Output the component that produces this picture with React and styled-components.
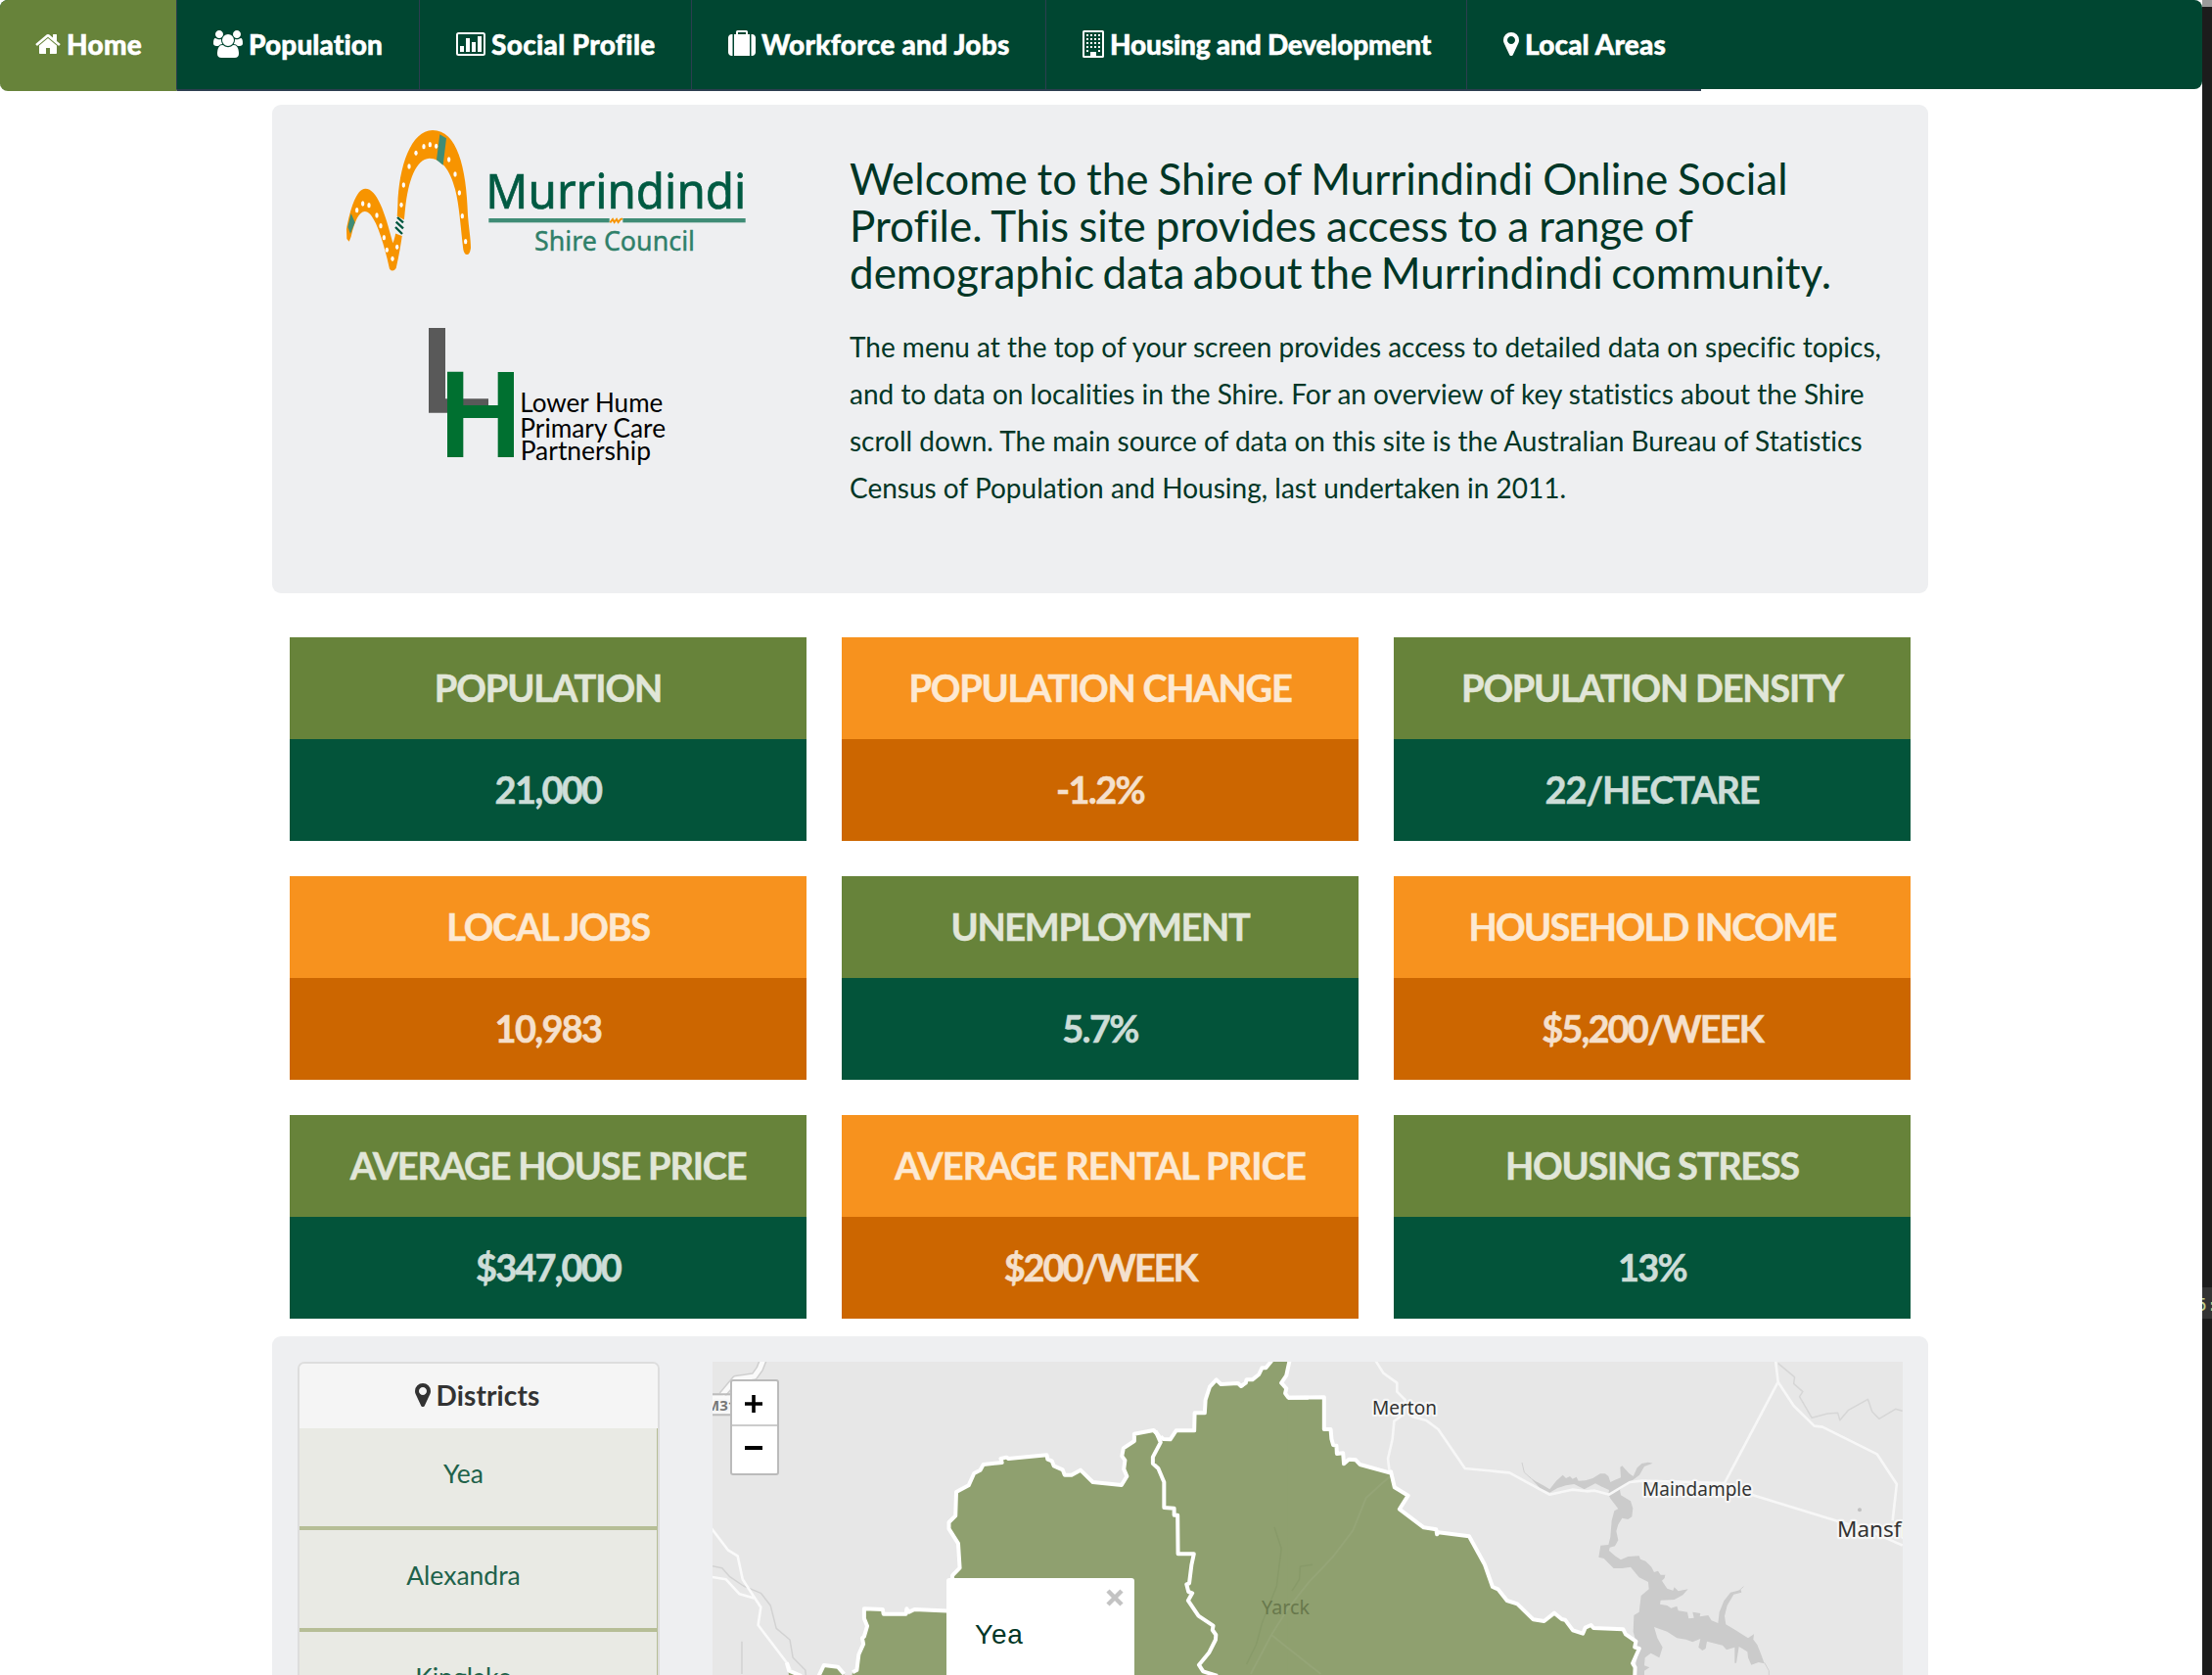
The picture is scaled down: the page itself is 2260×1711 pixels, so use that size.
import React from "react";
import styled, { createGlobalStyle } from "styled-components";

const GlobalStyle = createGlobalStyle`
  * { box-sizing: border-box; }
  html, body { margin: 0; padding: 0; background: #fff; }
  body {
    font-family: Lato, "Open Sans", sans-serif;
    font-variant-ligatures: none;
    overflow: hidden;
  }
`;

const Screen = styled.div`
  display: flex;
  width: 2260px;
  height: 1711px;
  overflow: hidden;
`;

const Page = styled.div`
  width: 2250px;
  height: 1711px;
  overflow: hidden;
  background: #fff;
`;

const Backdrop = styled.aside`
  width: 10px;
  height: 1711px;
  background: #1c1c1c;
  border-top: 7px solid #9a9a9a;
  padding-top: 1308px;
`;

const BackdropLine = styled.div`
  height: 32px;
  background: #333;
  color: #c3cf8d;
  font: 18px/35px "DejaVu Sans Mono", monospace;
  overflow: hidden;
  white-space: nowrap;
  text-indent: -6px;
`;

const Nav = styled.nav`
  display: flex;
  align-items: flex-start;
  height: 91px;
  background: #004631;
  border-radius: 8px;
`;

const NavItem = styled.a`
  display: flex;
  align-items: center;
  width: ${(p) => p.$width}px;
  height: 93px;
  padding: 0 0 1px ${(p) => (p.$active ? 36 : 37)}px;
  gap: 6px;
  color: #fff;
  background: ${(p) => (p.$active ? "#67833a" : "#004631")};
  border-right: ${(p) => (p.$last ? "0" : "1px solid #2c3e50")};
  border-bottom: 2px solid ${(p) => (p.$active ? "#67833a" : "#2c3e50")};
  border-radius: ${(p) => (p.$active ? "8px 0 0 8px" : "0")};
  font-size: 28px;
  font-weight: 900;
  -webkit-text-stroke: 0.5px #fff;
  letter-spacing: ${(p) => p.$spacing || 0}px;
  white-space: nowrap;
`;

const Glyph = styled.svg`
  display: block;
  flex: none;
  width: ${(p) => p.$width}px;
  height: 28px;
  fill: currentColor;
`;

const Container = styled.main`
  width: 1692px;
  margin: 16px 0 0 278px;
`;

const Well = styled.section`
  display: flex;
  background: #eeeff1;
  border-radius: 9px;
`;

const Intro = styled(Well)`
  height: 499px;
`;

const Logos = styled.div`
  width: 590px;
  padding: 23px 0 0 72px;
`;

const IntroText = styled.div`
  color: #003626;
  padding-top: 51px;
`;

const Lead = styled.h1`
  margin: 0;
  font-size: 44px;
  font-weight: 400;
  line-height: 48px;
  white-space: nowrap;
`;

const Line = styled.span`
  display: block;
  word-spacing: ${(p) => p.$words || 0}px;
`;

const Body = styled.p`
  margin: 28px 0 0;
  font-size: 28px;
  line-height: 48px;
  white-space: nowrap;
`;

const Stats = styled.section`
  display: grid;
  grid-template-columns: repeat(3, 528px);
  gap: 36px;
  padding: 45px 18px 18px;
`;

const Stat = styled.article`
  display: grid;
  grid-template-rows: 104px 104px;
  font-size: 38px;
  font-weight: 700;
  text-align: center;
  line-height: 103px;
  white-space: nowrap;
`;

const StatTitle = styled.div`
  background: ${(p) => (p.$warm ? "#f7921e" : "#67833a")};
  color: ${(p) => (p.$warm ? "#fde9d2" : "#e1e6d8")};
  letter-spacing: ${(p) => p.$spacing}px;
  -webkit-text-stroke: 0.5px currentColor;
`;

const StatValue = styled.div`
  background: ${(p) => (p.$warm ? "#cc6600" : "#03543a")};
  color: ${(p) => (p.$warm ? "#f5e0cc" : "#cdddd8")};
  letter-spacing: ${(p) => p.$spacing}px;
  -webkit-text-stroke: 0.5px currentColor;
`;

const Explore = styled(Well)`
  align-items: flex-start;
  height: 420px;
  padding: 26px;
  gap: 54px;
`;

const Districts = styled.div`
  width: 370px;
  height: 500px;
  border: 2px solid #ddd;
  border-radius: 7px;
  overflow: hidden;
`;

const DistrictsHead = styled.div`
  display: flex;
  align-items: center;
  justify-content: center;
  gap: 5px;
  height: 66px;
  padding: 0 2px 2px 0;
  background: #f5f5f5;
  color: #333;
  font-size: 28px;
  font-weight: 700;
  letter-spacing: 0.15px;
`;

const District = styled.div`
  height: 104px;
  padding-right: 30px;
  border-right: 1px solid #b6be96;
  border-bottom: 4px solid #b6be96;
  background: #e9eae4;
  color: #20624a;
  font-size: 26.5px;
  line-height: 92px;
  text-align: center;
`;

const MapBox = styled.div`
  position: relative;
  width: 1216px;
  height: 320px;
  background: #e7e7e7;
  overflow: hidden;
`;

const ZoomControl = styled.div`
  position: absolute;
  left: 18px;
  top: 18px;
  width: 50px;
  border: 2px solid #bbb;
  border-radius: 3px;
  background: #fff;
`;

const ZoomButton = styled.div`
  display: flex;
  align-items: center;
  justify-content: center;
  height: ${(p) => (p.$first ? 46 : 48)}px;
  padding: ${(p) => (p.$first ? "2px" : "0")} 2px 0 0;
  border-bottom: ${(p) => (p.$first ? "2px solid #ccc" : "0")};
`;

const Popup = styled.div`
  position: absolute;
  left: 239px;
  top: 221px;
  width: 192px;
  height: 140px;
  padding: 40px 29px;
  border-radius: 3px;
  background: #fff;
  color: #003626;
  font: 28px/36px "Liberation Sans", Arial, sans-serif;
  letter-spacing: 0.8px;
`;

const Close = styled.svg`
  position: absolute;
  right: 11px;
  top: 11px;
`;

const HomeIcon = () => (
  <Glyph $width={26} viewBox="64 0 1664 1792">
    <path d="M1472 992v480q0 26-19 45t-45 19h-384v-384h-256v384h-384q-26 0-45-19t-19-45v-480q0-1 .5-3t.5-3l575-474 575 474q1 2 1 6zm223-69l-62 74q-8 9-21 11h-3q-13 0-21-7l-692-577-692 577q-12 8-24 7-13-2-21-11l-62-74q-8-10-7-23.5t11-21.5l719-599q32-26 76-26t76 26l244 204v-195q0-14 9-23t23-9h192q14 0 23 9t9 23v408l219 182q10 8 11 21.5t-7 23.5z" />
  </Glyph>
);

const UsersIcon = () => (
  <Glyph $width={30} viewBox="0 0 1920 1792">
    <path d="M593 896q-162 5-265 128h-134q-82 0-138-40.5t-56-118.5q0-353 124-353 6 0 43.5 21t97.5 42.5 119 21.5q67 0 133-23-5 37-5 66 0 139 81 256zm1071 637q0 120-73 189.5t-194 69.5h-874q-121 0-194-69.5t-73-189.5q0-53 3.5-103.5t14-109 26.5-108.5 43-97.5 62-81 85.5-53.5 111.5-20q10 0 43 21.5t73 48 107 48 135 21.5 135-21.5 107-48 73-48 43-21.5q61 0 111.5 20t85.5 53.5 62 81 43 97.5 26.5 108.5 14 109 3.5 103.5zm-1024-1277q0 106-75 181t-181 75-181-75-75-181 75-181 181-75 181 75 75 181zm704 384q0 159-112.5 271.5t-271.5 112.5-271.5-112.5-112.5-271.5 112.5-271.5 271.5-112.5 271.5 112.5 112.5 271.5zm576 225q0 78-56 118.5t-138 40.5h-134q-103-123-265-128 81-117 81-256 0-29-5-66 66 23 133 23 59 0 119-21.5t97.5-42.5 43.5-21q124 0 124 353zm-128-609q0 106-75 181t-181 75-181-75-75-181 75-181 181-75 181 75 75 181z" />
  </Glyph>
);

const ChartIcon = () => (
  <Glyph $width={30} viewBox="0 0 30 28">
    <rect x="1" y="3" width="28" height="22" rx="1.5" fill="none" stroke="currentColor" strokeWidth="2" />
    <path d="M4 16h4v6h-4zM10 8h4v14h-4zM16 12h4v10h-4zM22 6h4v16h-4z" />
  </Glyph>
);

const SuitcaseIcon = () => (
  <Glyph $width={28} viewBox="0 0 1792 1792">
    <path d="M640 256h512v-128h-512v128zm-352 0v1408h-64q-92 0-158-66t-66-158v-960q0-92 66-158t158-66h64zm1120 0v1408h-1024v-1408h128v-160q0-40 28-68t68-28h576q40 0 68 28t28 68v160h128zm384 224v960q0 92-66 158t-158 66h-64v-1408h64q92 0 158 66t66 158z" />
  </Glyph>
);

const BuildingIcon = () => (
  <Glyph $width={22} viewBox="0 0 22 28">
    <rect x="1" y="1" width="20" height="26" rx="0.6" fill="none" stroke="currentColor" strokeWidth="2" />
    {[4, 8, 12, 16].map((y) => (
      <path key={y} d={`M4 ${y}h2v2h-2zM8 ${y}h2v2h-2zM12 ${y}h2v2h-2zM16 ${y}h2v2h-2z`} />
    ))}
    <path d="M4 20h2v2h-2zM16 20h2v2h-2zM8 22h6v5h-6z" />
  </Glyph>
);

const MarkerIcon = () => (
  <Glyph $width={16} viewBox="0 0 1024 1792">
    <path d="M768 640q0-106-75-181t-181-75-181 75-75 181 75 181 181 75 181-75 75-181zm256 0q0 109-33 179l-364 774q-16 33-47.5 52t-67.5 19-67.5-19-46.5-52l-365-774q-33-70-33-179 0-212 150-362t362-150 362 150 150 362z" />
  </Glyph>
);

const LogoArt = () => {
  const dots = [
    [122, 294], [141, 299], [165, 330], [104, 314], [177, 362], [187, 398], [196, 436], [213, 463], [227, 427],
    [240, 298], [247, 237], [264, 180], [285, 139], [309, 119], [328, 113], [347, 118], [386, 159], [405, 204],
    [418, 261], [427, 332], [437, 410],
  ];
  return (
    <svg width="440" height="350" viewBox="60 60 1320 1050" fontFamily="Noto Sans, Open Sans, sans-serif">
      <path
        fill="#f79400"
        d="M72 372C84 310 102 248 130 248C165 248 190 320 214 415C226 390 226 350 229 300C232 180 270 69 336 69C410 69 440 180 444 330C447 370 453 400 453 430Q450 450 442 450Q434 452 430 435C422 370 418 300 405 250C390 190 362 155 326 155C285 158 262 220 252 310C246 380 236 440 224 492Q214 506 204 494C192 440 178 390 162 355C150 330 140 318 128 318C110 320 98 345 86 395L80 410L73 402Z"
      />
      {dots.map(([x, y]) => (
        <ellipse key={`${x}-${y}`} cx={x} cy={y} rx="5" ry="8" fill="#fff" />
      ))}
      <path fill="#3f8c76" d="M358 82L378 94L368 176L348 160ZM86 324L98 352L84 386L76 366Z" />
      <path fill="#eeeff1" d="M222 330L252 345L244 394L218 384Z" />
      <path stroke="#00573f" strokeWidth="7" fill="none" d="M228 336L246 352M224 350L246 370M222 366L243 387" />
      <g fill="#005a42" stroke="#005a42" strokeWidth="2">
        <text x="499" y="308" fontSize="146" textLength="798" lengthAdjust="spacingAndGlyphs">Murrindindi</text>
      </g>
      <rect x="508" y="339" width="370" height="13" fill="#3f8c76" />
      <rect x="919" y="339" width="376" height="13" fill="#3f8c76" />
      <path d="M880 352L888 342L893 351L900 342L905 351L912 342L918 340" stroke="#f79400" strokeWidth="6" fill="none" />
      <g fill="#2f8069" stroke="#2f8069" strokeWidth="1.2">
        <text x="648" y="438" fontSize="84" textLength="492" lengthAdjust="spacingAndGlyphs">Shire Council</text>
      </g>
      <path fill="#595959" d="M324 675H375V892H507V935H324Z" />
      <path fill="#007030" d="M381 809H430V912H536V810H585V1071H536V951H430V1071H381Z" />
      <g fill="#000" fontFamily="Lato, sans-serif" fontSize="78">
        <text x="604" y="932" textLength="438" lengthAdjust="spacingAndGlyphs">Lower Hume</text>
        <text x="604" y="1011" textLength="446" lengthAdjust="spacingAndGlyphs">Primary Care</text>
        <text x="605" y="1079" textLength="400" lengthAdjust="spacingAndGlyphs">Partnership</text>
      </g>
    </svg>
  );
};

const WEST = "translate(-8 -11) scale(0.3954 0.33333)";
const EAST = "translate(592 -11) scale(0.4209 0.33333)";
const LAKE = "translate(812 89) scale(0.33333)";

const yeaOutline =
  "382,985 393,978 398,930 410,898 407,880 412,875 420,843 412,820 412,790 460,792 462,806 520,806 522,790 528,800 542,792 640,797 640,688 659,665 655,590 631,545 631,525 648,505 650,432 682,412 696,375 712,365 720,348 768,342 765,330 780,326 785,330 884,319 886,332 897,337 902,352 925,364 930,380 948,380 971,365 1003,402 1077,411 1091,384 1083,362 1086,335 1078,322 1082,298 1110,276 1110,254 1160,243 1172,258 1178,270";
const northOutline =
  "1178,262 1185,270 1203,271 1218,244 1265,244 1266,190 1292,190 1294,150 1305,110 1322,88 1334,102 1378,99 1386,108 1398,98 1400,88 1415,88 1432,72 1440,52 1450,52 1465,30";
const notch = "1512,25 1503,75 1490,98 1503,115 1500,130 1508,143 1560,143";
const divide =
  "1165,245 1178,280 1158,325 1158,345 1172,360 1187,402 1187,480 1213,482 1213,503 1222,503 1223,622 1264,622 1258,655 1252,712 1245,715 1250,738 1260,742 1249,765 1276,812 1314,842 1312,855 1321,870 1320,885 1303,925 1277,962 1288,982 1325,996";
const eastOutline =
  "-10,143 78,142 78,240 94,240 96,270 100,288 108,290 109,315 124,313 126,346 138,332 155,334 165,348 237,373 240,370 249,418 282,443 261,485 320,541 350,547 352,562 355,556 430,568 468,655 487,723 500,730 522,765 547,775 586,823 612,828 637,803 655,822 663,824 682,856 706,866 712,848 726,840 732,849 804,853 810,868 835,890 832,908 843,912 827,957 833,970 832,1000";

const MapArt = () => (
  <svg width="1216" height="320" viewBox="0 0 1216 320" fill="none" strokeLinejoin="round">
    <g transform={LAKE}>
      <path stroke="#d0d0d0" strokeWidth="3" d="M45 42L52 72L72 90M705 440L724 422M788 655L802 680V693" />
      <path
        fill="#cbcbcb"
        d="M66 84L85 98L110 112L130 124L150 98L170 80L180 90L192 84L200 92L212 86L218 98L240 97L262 90L285 76L300 76L310 84L316 102L330 95L348 88L346 56L352 52L374 76L386 84L398 58L412 45L432 41L446 44L420 54L405 80L384 96L370 104L345 125L348 142L378 160L385 182L382 208L370 216L352 212L340 232L334 252L340 280L330 298L314 302L312 312L330 328L348 340L370 330L404 328L408 338L424 344L442 362L450 378L462 374L470 386L484 386L482 396L474 404L490 428L508 434L512 424L524 436L554 430L538 448L512 462L470 464L468 476L490 480L502 488L520 482L524 496L552 500L556 520L572 518L568 500L592 504L590 514L616 510L626 526L646 534L650 500L664 466L684 440L716 432L718 440L694 446L674 480L666 512L670 538L700 556L738 580L756 568L754 584L766 600L778 630L788 658L770 654L748 662L738 640L736 622L710 606L702 656L697 656L697 608L672 616L660 602L612 590L608 612L598 618L586 608L592 582L568 592L548 584L520 580L490 560L450 546L460 580L476 608L466 640L440 626L422 640L420 664L436 670L420 680V693H390L394 660L404 612L386 606L394 590L386 560L388 510L404 500L410 450L434 430L432 408L404 394L378 362L352 366L326 366L296 336L280 332L286 296L310 294L316 270L320 220L328 190L340 184L316 152L310 140L312 126L290 116L270 106L236 124L205 108L180 112L154 120L130 134L100 120Z"
      />
      <circle cx="1080" cy="187" r="6" fill="#c0c0c0" />
    </g>
    <g transform={EAST}>
      <g stroke="#d6d6d6" strokeWidth="1.5">
        <path vectorEffect="non-scaling-stroke" d="M1180 38L1220 80L1218 100L1240 125L1232 140L1262 205L1300 192L1325 190L1330 212L1350 182L1398 148L1408 185L1425 208L1465 178L1482 184" />
      </g>
      <g stroke="#f7f7f7" strokeWidth="2.6">
        <path vectorEffect="non-scaling-stroke" d="M203 30L222 68L255 98L255 125L275 150L270 195L248 215L244 270L233 330L237 373" />
        <path vectorEffect="non-scaling-stroke" d="M290 200L325 212L355 240L420 360L528 373L625 440L680 425L715 430L735 428L770 440L820 402L850 398L1050 405L1180 95L1174 30" />
        <path vectorEffect="non-scaling-stroke" d="M1180 95L1218 168L1268 230L1288 233L1420 316L1468 408L1458 520M1115 440L1310 516L1400 550L1482 596" />
      </g>
    </g>
    <g transform={WEST} stroke="#fafafa">
      <path vectorEffect="non-scaling-stroke" stroke="#cfcfcf" strokeWidth="8" d="M152 25L142 55L128 78L80 86L45 135" />
      <path vectorEffect="non-scaling-stroke" strokeWidth="5" d="M152 25L142 55L128 78L80 86L45 135" />
      <path vectorEffect="non-scaling-stroke" stroke="#d2d2d2" strokeWidth="1.5" d="M0 655L45 665L65 692L100 720L145 742L170 780L185 850L220 885L228 940L260 978L262 1000M96 890V990" />
      <path vectorEffect="non-scaling-stroke" strokeWidth="2.6" d="M15 540L60 610L85 628L98 700L130 758L145 785L138 840L215 960L230 1000M15 692L55 700L90 745L130 758" />
      <path vectorEffect="non-scaling-stroke" stroke="#bdbdbd" strokeWidth="2" d="M15 133H75M15 196H75" />
      <path fill="#fafafa" stroke="none" d="M15 137H72V192H15Z" />
    </g>
    <g fill="#8fa06f">
      <g transform={WEST}>
        <polygon points={`${yeaOutline} ${northOutline} ${notch} 1560,1010 378,1010`} />
        <path d="M215 970L250 1000H218ZM293 1000L308 963L344 968L360 990V1000Z" />
      </g>
      <g transform={EAST}>
        <polygon points={`${eastOutline} -10,1010`} />
      </g>
    </g>
    <g stroke="#889a69" strokeWidth="1.5">
      <g transform={WEST}>
        <path vectorEffect="non-scaling-stroke" d="M1472 540L1490 605L1478 720L1440 835L1425 900L1400 960" />
      </g>
      <g transform={EAST}>
        <path vectorEffect="non-scaling-stroke" d="M50 655L20 660L18 700L0 735" />
      </g>
    </g>
    <g stroke="#95a577" strokeWidth="2">
      <g transform={EAST}>
        <path vectorEffect="non-scaling-stroke" d="M237 385L180 450L148 550L100 630L40 710L-10 790L-50 870L-100 990M-50 870L0 920L70 990" />
      </g>
    </g>
    <g stroke="#fff" strokeWidth="4">
      <g transform={WEST}>
        {[yeaOutline, northOutline, notch, divide].map((points) => (
          <polyline key={points} vectorEffect="non-scaling-stroke" points={points} />
        ))}
        <path vectorEffect="non-scaling-stroke" d="M212 955L218 980L250 996M293 1000L308 963L344 968L360 990" />
      </g>
      <g transform={EAST}>
        <polyline vectorEffect="non-scaling-stroke" points={eastOutline} />
      </g>
    </g>
    <g fontFamily="Noto Sans, Open Sans, sans-serif" fill="#333" stroke="#f6f6f6" strokeWidth="4.5" paintOrder="stroke">
      <text x="674" y="53.5" fontSize="20" textLength="66" lengthAdjust="spacingAndGlyphs">Merton</text>
      <text x="950" y="137" fontSize="20" textLength="112" lengthAdjust="spacingAndGlyphs">Maindample</text>
      <text x="1149" y="178.5" fontSize="22.5">Mansfield</text>
      <text x="-7" y="50" fontSize="15" fontWeight="700" fill="#777">M31</text>
      <text x="561" y="257.5" fontSize="20" fill="#68784c" stroke="none" textLength="49" lengthAdjust="spacingAndGlyphs">Yarck</text>
    </g>
  </svg>
);

const navItems = [
  { label: "Home", Icon: HomeIcon, width: 181, spacing: 0.25, active: true },
  { label: "Population", Icon: UsersIcon, width: 248, spacing: 0.1 },
  { label: "Social Profile", Icon: ChartIcon, width: 278, spacing: 0.3 },
  { label: "Workforce and Jobs", Icon: SuitcaseIcon, width: 362, spacing: 0.24 },
  { label: "Housing and Development", Icon: BuildingIcon, width: 430, spacing: -0.19 },
  { label: "Local Areas", Icon: MarkerIcon, width: 239, spacing: 0.13 },
];

const stats = [
  { title: "POPULATION", tight: -1.1, value: "21,000", valueTight: -1.7 },
  { title: "POPULATION CHANGE", tight: -1.25, value: "-1.2%", valueTight: -1.7, warm: true },
  { title: "POPULATION DENSITY", tight: -1.25, value: "22/HECTARE", valueTight: -1.15 },
  { title: "LOCAL JOBS", tight: -1.3, value: "10,983", valueTight: -1.7, warm: true },
  { title: "UNEMPLOYMENT", tight: -1.35, value: "5.7%", valueTight: -1.7 },
  { title: "HOUSEHOLD INCOME", tight: -1.7, value: "$5,200/WEEK", valueTight: -1.9, warm: true },
  { title: "AVERAGE HOUSE PRICE", tight: -1.2, value: "$347,000", valueTight: -1.9 },
  { title: "AVERAGE RENTAL PRICE", tight: -0.86, value: "$200/WEEK", valueTight: -2.1, warm: true },
  { title: "HOUSING STRESS", tight: -1.3, value: "13%", valueTight: -1.8 },
];

export default function App() {
  return (
    <Screen>
      <GlobalStyle />
      <Page>
        <Nav>
          {navItems.map(({ label, Icon, width, spacing, active }, i) => (
            <NavItem
              key={label}
              $width={width}
              $spacing={spacing}
              $active={active}
              $last={i === navItems.length - 1}
            >
              <Icon />
              {label}
            </NavItem>
          ))}
        </Nav>
        <Container>
          <Intro>
            <Logos>
              <LogoArt />
            </Logos>
            <IntroText>
              <Lead>
                <Line $words={-1.4}>Welcome to the Shire of Murrindindi Online Social</Line>
                <Line $words={-1.2}>Profile. This site provides access to a range of</Line>
                <Line $words={-2.9}>demographic data about the Murrindindi community.</Line>
              </Lead>
              <Body>
                <Line>The menu at the top of your screen provides access to detailed data on specific topics,</Line>
                <Line>and to data on localities in the Shire. For an overview of key statistics about the Shire</Line>
                <Line>scroll down. The main source of data on this site is the Australian Bureau of Statistics</Line>
                <Line>Census of Population and Housing, last undertaken in 2011.</Line>
              </Body>
            </IntroText>
          </Intro>
          <Stats>
            {stats.map(({ title, tight, value, valueTight, warm }) => (
              <Stat key={title}>
                <StatTitle $warm={warm} $spacing={tight}>{title}</StatTitle>
                <StatValue $warm={warm} $spacing={valueTight}>{value}</StatValue>
              </Stat>
            ))}
          </Stats>
          <Explore>
            <Districts>
              <DistrictsHead>
                <MarkerIcon />
                Districts
              </DistrictsHead>
              <District>Yea</District>
              <District>Alexandra</District>
              <District>Kinglake</District>
            </Districts>
            <MapBox>
              <MapArt />
              <ZoomControl>
                <ZoomButton $first>
                  <svg width="18" height="18" stroke="#000" strokeWidth="3.6">
                    <path d="M0 9H18M9 0V18" />
                  </svg>
                </ZoomButton>
                <ZoomButton>
                  <svg width="18" height="18" stroke="#000" strokeWidth="4">
                    <path d="M0 7H18" />
                  </svg>
                </ZoomButton>
              </ZoomControl>
              <Popup>
                Yea
                <Close width="18" height="18" stroke="#c3c3c3" strokeWidth="4.5">
                  <path d="M2 2L16 16M16 2L2 16" />
                </Close>
              </Popup>
            </MapBox>
          </Explore>
        </Container>
      </Page>
      <Backdrop>
        <BackdropLine>5:</BackdropLine>
      </Backdrop>
    </Screen>
  );
}
